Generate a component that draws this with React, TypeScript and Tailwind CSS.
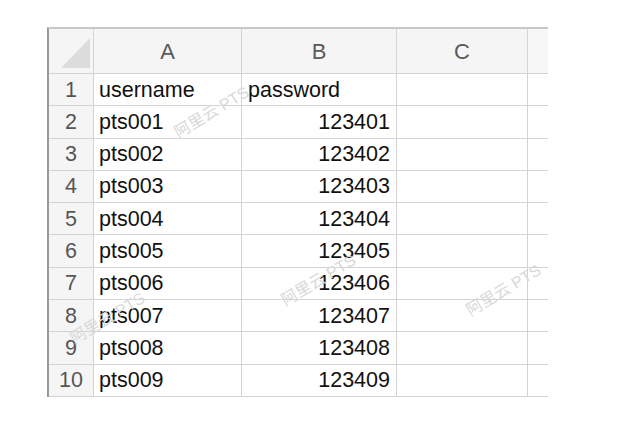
import React from "react";

const rows = [
  ["username", "password"],
  ["pts001", "123401"],
  ["pts002", "123402"],
  ["pts003", "123403"],
  ["pts004", "123404"],
  ["pts005", "123405"],
  ["pts006", "123406"],
  ["pts007", "123407"],
  ["pts008", "123408"],
  ["pts009", "123409"],
];

const line = "border-[#d3d3d3]";

function Watermark({ x, y }: { x: number; y: number }) {
  return (
    <span
      className="absolute whitespace-nowrap text-[16px] leading-none text-[#d9d9d9] origin-left -rotate-[31deg] pointer-events-none"
      style={{ left: x, top: y, fontFamily: '"Liberation Sans", "Noto Sans CJK SC", sans-serif' }}
    >
      阿里云 PTS
    </span>
  );
}

export default function App() {
  return (
    <div
      className="relative w-[620px] h-[440px] bg-white overflow-hidden pt-[27px] pl-[47px]"
      style={{ fontFamily: '"Liberation Sans", Arial, sans-serif' }}
    >
      <div className="flex flex-col w-[501px] border-t-2 border-t-[#c8c8c8] border-l-2 border-l-[#9a9a9a]">
        {/* header */}
        <div className="flex h-[45px] bg-[#f5f5f5]">
          <div className={`relative w-[45px] border-r border-b ${line}`}>
            <svg className="absolute left-[12px] top-[9px]" width="29" height="30" viewBox="0 0 29 30">
              <polygon points="29,0 29,30 0,30" fill="#dcdcdc" />
            </svg>
          </div>
          {["A", "B", "C"].map((c, i) => (
            <div
              key={c}
              className={`flex items-center justify-center border-r border-b ${line} text-[22px] text-[#5a5a5a] ${
                i === 0 ? "w-[148px]" : i === 1 ? "w-[155px]" : "w-[131px]"
              }`}
            >
              {c}
            </div>
          ))}
          <div className={`w-[20px] border-b ${line} bg-[#f7f7f7]`} />
        </div>
        {rows.map((r, idx) => (
          <div key={idx} className="flex h-[32.3px]">
            <div
              className={`flex items-center justify-center w-[45px] bg-[#f5f5f5] border-r border-b ${line} text-[21.5px] text-[#555]`}
            >
              {idx + 1}
            </div>
            <div className={`flex items-center w-[148px] pl-[5px] border-r border-b ${line} text-[21.5px] text-[#111]`}>
              {r[0]}
            </div>
            <div
              className={`flex items-center w-[155px] px-[6px] border-r border-b ${line} text-[21.5px] text-[#111] ${
                idx === 0 ? "justify-start" : "justify-end"
              }`}
            >
              {r[1]}
            </div>
            <div className={`w-[131px] border-r border-b ${line}`} />
            <div className={`w-[20px] border-b ${line}`} />
          </div>
        ))}
      </div>
      <Watermark x={176} y={126} />
      <Watermark x={283} y={294} />
      <Watermark x={72} y={332} />
      <Watermark x={468} y={304} />
    </div>
  );
}
